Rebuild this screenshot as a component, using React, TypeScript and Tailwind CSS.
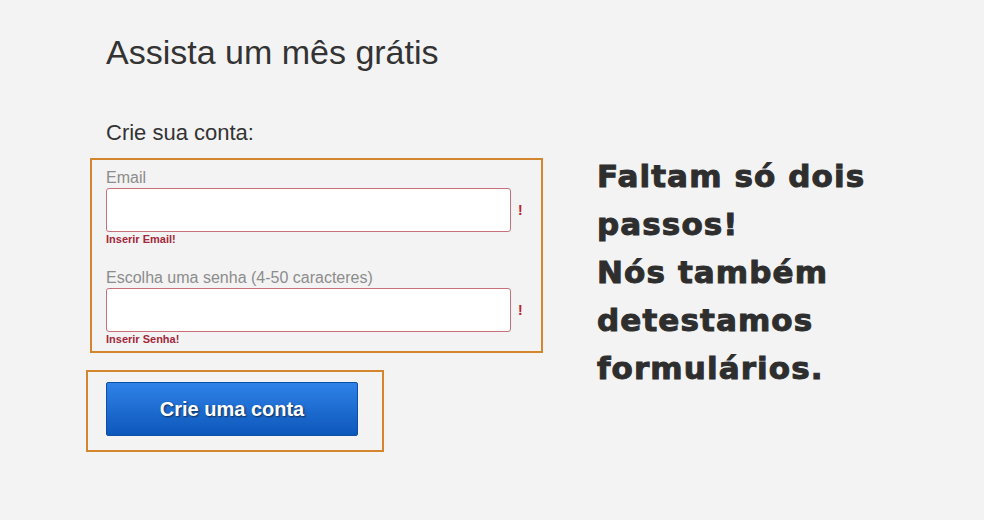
const Field = ({ label, error, mt }: { label: string; error: string; mt: string }) => (
  <div className={mt}>
    <label className="block text-[16px] leading-[18px] text-[#8c8c8c]">{label}</label>
    <div className="flex items-center">
      <input
        type="text"
        className="mt-[1px] h-[44px] w-[405px] rounded-[3px] border border-[#c9707a] bg-white outline-none"
      />
      <span className="ml-[7px] text-[14px] font-bold leading-none text-[#c0202a]">!</span>
    </div>
    <p className="mt-[1px] text-[11px] font-bold leading-[13px] text-[#a3283a]">{error}</p>
  </div>
);

const App = () => {
  return (
    <div className="h-[520px] w-full overflow-hidden bg-[#f3f3f3] font-['Liberation_Sans',Arial,sans-serif] text-[#333]">
      <div className="pl-[106px] pt-[32px]">
        <h1 className="text-[34px] font-normal leading-[40px] text-[#333]">Assista um mês grátis</h1>
        <p className="mt-[49px] text-[22px] leading-[24px] text-[#333]">Crie sua conta:</p>
      </div>

      <div className="mt-[13px] flex pl-[86px]">
        <div className="flex flex-col">
          <div className="ml-[4px] w-[453px] border-2 border-[#d4862f] pb-[5px] pl-[14px] pt-[9px]">
            <Field label="Email" error="Inserir Email!" mt="" />
            <Field label="Escolha uma senha (4-50 caracteres)" error="Inserir Senha!" mt="mt-[23px]" />
          </div>

          <div className="mt-[17px] w-[298px] border-2 border-[#d4862f] pb-[14px] pl-[18px] pt-[10px]">
            <button className="h-[54px] w-[252px] rounded-[2px] border border-[#0b4fa6] bg-gradient-to-b from-[#2f82e8] to-[#0c57ba] text-[20px] font-bold text-white [text-shadow:1px_1px_2px_rgba(0,0,0,0.6)]">
              Crie uma conta
            </button>
          </div>
        </div>

        <div className="-mt-[6px] ml-[54px] font-['DejaVu_Sans',sans-serif] text-[31px] font-bold leading-[48px] tracking-[1.1px] text-[#2e2e2e] [-webkit-text-stroke:1px_#2e2e2e]">
          <p>Faltam só dois</p>
          <p>passos!</p>
          <p>Nós também</p>
          <p>detestamos</p>
          <p>formulários.</p>
        </div>
      </div>
    </div>
  );
};

export default App;
